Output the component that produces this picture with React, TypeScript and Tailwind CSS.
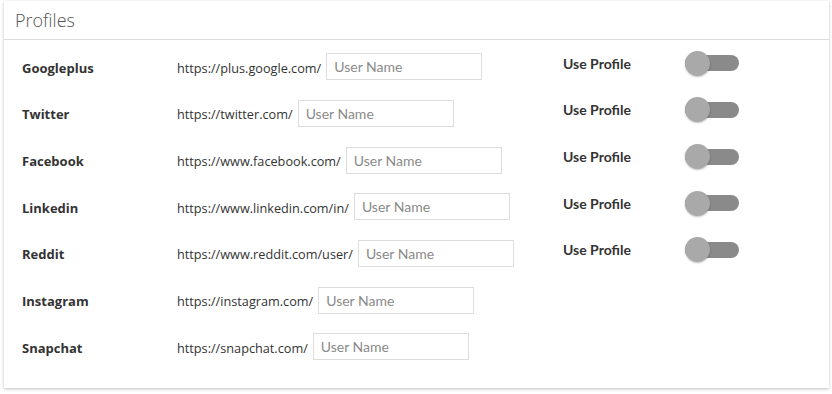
import React from "react";

const rows = [
  { name: "Googleplus", url: "https://plus.google.com/", toggle: true },
  { name: "Twitter", url: "https://twitter.com/", toggle: true },
  { name: "Facebook", url: "https://www.facebook.com/", toggle: true },
  { name: "Linkedin", url: "https://www.linkedin.com/in/", toggle: true },
  { name: "Reddit", url: "https://www.reddit.com/user/", toggle: true },
  { name: "Instagram", url: "https://instagram.com/", toggle: false },
  { name: "Snapchat", url: "https://snapchat.com/", toggle: false },
];

function Toggle() {
  return (
    <div className="relative w-[54px] h-[25px] flex items-center">
      <div className="w-[54px] h-[16px] rounded-full bg-[#8a8a8a]" />
      <div className="absolute left-0 top-0 w-[25px] h-[25px] rounded-full bg-[#a9a9a9] shadow-[0_1px_2px_rgba(0,0,0,0.25)]" />
    </div>
  );
}

export default function App() {
  return (
    <div className="w-[832px] h-[394px] bg-white pt-[1px] pl-[4px] pr-[3px]">
      <div className="bg-white shadow-[0_1px_3px_rgba(0,0,0,0.25)] h-[387px] flex flex-col">
        <div className="h-[39px] flex items-center pl-[11px] border-b border-[#dcdcdc] text-[18px] text-[#555] font-['Open_Sans',sans-serif] font-light">
          Profiles
        </div>
        <div className="flex flex-col pt-[5px]">
          {rows.map((r) => (
            <div key={r.name} className="h-[46.67px] flex items-center pl-[18px]">
              <div className="w-[155px] text-[13px] font-bold text-[#333] font-['Open_Sans',sans-serif]">
                {r.name}
              </div>
              <div className="w-[386px] flex items-center gap-[5px]">
                <span className="text-[12.7px] text-[#333] font-['Open_Sans',sans-serif]">{r.url}</span>
                <input
                  placeholder="User Name"
                  className="w-[156px] h-[27px] border border-[#dddddd] px-[7px] text-[14px] text-[#555] placeholder:text-[#8a8a8a] font-['Lato',sans-serif] outline-none -mt-[3px]"
                />
              </div>
              {r.toggle && (
                <div className="flex items-center mb-[10px]">
                  <span className="w-[122px] text-[14px] font-bold text-[#333] font-['Lato',sans-serif]">Use Profile</span>
                  <Toggle />
                </div>
              )}
            </div>
          ))}
        </div>
      </div>
    </div>
  );
}
